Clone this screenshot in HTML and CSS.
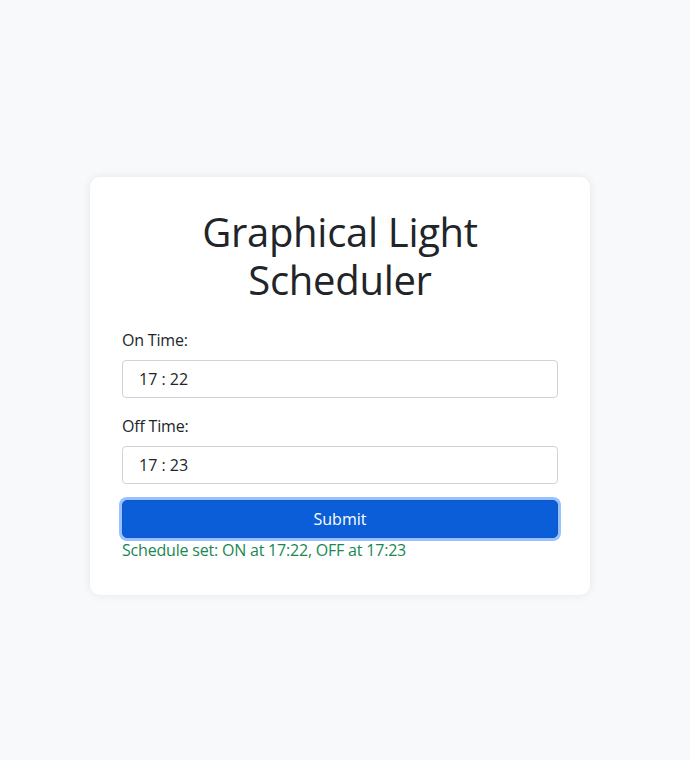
FILE: index.html
```html
<!DOCTYPE html>
<html lang="en">
<head>
<meta charset="utf-8">
<title>Graphical Light Scheduler</title>
<link rel="stylesheet" href="styles.css">
</head>
<body>
<main class="page">
  <section class="card">
    <h1 class="title">Graphical Light Scheduler</h1>
    <form class="form">
      <div class="field">
        <label class="label" for="on">On Time:</label>
        <input class="input" id="on" type="text" value="17 : 22" readonly>
      </div>
      <div class="field">
        <label class="label" for="off">Off Time:</label>
        <input class="input" id="off" type="text" value="17 : 23" readonly>
      </div>
      <button class="btn" type="button">Submit</button>
      <p class="status">Schedule set: ON at 17:22, OFF at 17:23</p>
    </form>
  </section>
</main>
</body>
</html>
```
FILE: styles.css
```css
* { box-sizing: border-box; }
html, body { margin: 0; padding: 0; }
body {
  background: #f8f9fa;
  font-family: "Open Sans", "Noto Sans", sans-serif;
  color: #212529;
  font-size: 16px;
  line-height: 1.5;
  letter-spacing: -0.2px;
}
.page {
  min-height: 760px;
  display: flex;
  align-items: center;
  justify-content: center;
  padding: 12px 10px 0 0;
}
.card {
  width: 500px;
  background: #fff;
  border-radius: 10px;
  box-shadow: 0 0 10px rgba(0,0,0,0.08);
  padding: 31px 32px 33px;
}
.title {
  margin: 0 0 24px;
  font-size: 40px;
  font-weight: 400;
  line-height: 1.2;
  text-align: center;
  padding: 0 50px;
  letter-spacing: -0.3px;
}
.form { display: flex; flex-direction: column; }
.field { display: flex; flex-direction: column; margin-bottom: 16px; }
.label { margin-bottom: 8px; }
.input {
  height: 38px;
  padding: 6px 16px;
  font: inherit;
  color: #212529;
  border: 1px solid #ced4da;
  border-radius: 4px;
  background: #fff;
  outline: none;
}
.btn {
  height: 38px;
  font: inherit;
  color: #fff;
  background: #0b5ed7;
  border: 1px solid #0a58ca;
  border-radius: 5px;
  box-shadow: 0 0 0 3px rgba(49,132,253,0.5);
}
.status {
  margin: 0;
  color: #198754;
}
```
